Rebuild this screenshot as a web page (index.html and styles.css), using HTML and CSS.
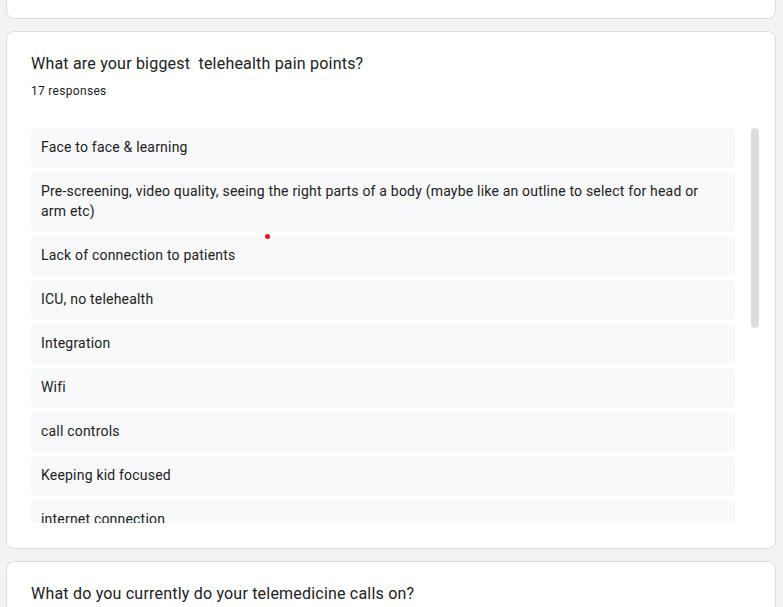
FILE: index.html
```html
<!DOCTYPE html>
<html>
<head>
<meta charset="utf-8">
<link rel="stylesheet" href="styles.css">
</head>
<body>
<div class="page">
  <div class="card card-top"></div>
  <div class="card">
    <div class="title">What are your biggest&nbsp; telehealth pain points?</div>
    <div class="count">17 responses</div>
    <div class="answers">
      <div class="list">
        <div class="item">Face to face &amp; learning</div>
        <div class="item">Pre-screening, video quality, seeing the right parts of a body (maybe like an outline to select for head or arm etc)</div>
        <div class="item">Lack of connection to patients</div>
        <div class="item">ICU, no telehealth</div>
        <div class="item">Integration</div>
        <div class="item">Wifi</div>
        <div class="item">call controls</div>
        <div class="item">Keeping kid focused</div>
        <div class="item">internet connection</div>
        <div class="item">Scheduling</div>
      </div>
      <div class="scrollbar"><div class="thumb"></div></div>
      <span class="dot"></span>
    </div>
  </div>
  <div class="card">
    <div class="title">What do you currently do your telemedicine calls on?</div>
  </div>
</div>
</body>
</html>
```
FILE: styles.css
```css
html, body {
  margin: 0;
  padding: 0;
  background: #f1f3f4;
  font-family: Roboto, "Liberation Sans", sans-serif;
  color: #202124;
  overflow: hidden;
}
.page {
  width: 770px;
  margin-left: 6px;
  display: flex;
  flex-direction: column;
  gap: 12px;
}
.card {
  background: #fff;
  border: 1px solid #dadce0;
  border-radius: 8px;
  padding: 20px 16px 25px 24px;
}
.card-top {
  border-top: none;
  border-radius: 0 0 8px 8px;
  height: 18px;
  padding: 0;
}
.title {
  font-size: 16px;
  line-height: 24px;
  letter-spacing: 0.2px;
}
.count {
  font-size: 12px;
  line-height: 16px;
  margin-top: 7px;
  letter-spacing: 0.3px;
}
.answers {
  position: relative;
  margin-top: 29px;
  height: 395px;
  display: flex;
  gap: 16px;
  overflow: hidden;
}
.list {
  width: 704px;
  flex: none;
  display: flex;
  flex-direction: column;
  gap: 4px;
}
.item {
  background: #f8f9fa;
  border-radius: 4px;
  padding: 9px 10px 11px 10px;
  font-size: 14px;
  line-height: 20px;
  letter-spacing: 0.2px;
}
.scrollbar {
  width: 8px;
  flex: none;
}
.thumb {
  height: 200px;
  background: #dadce0;
  border-radius: 4px;
}
.dot {
  position: absolute;
  left: 234px;
  top: 106px;
  width: 5px;
  height: 5px;
  border-radius: 50%;
  background: #e8141b;
}
```
